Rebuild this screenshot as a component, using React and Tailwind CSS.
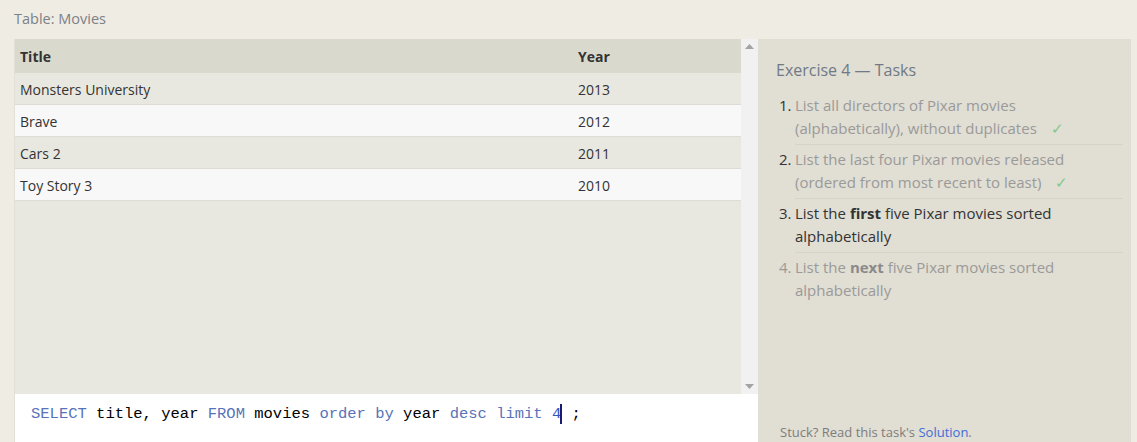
import { useState } from 'react'

const movies = [
  { title: 'Monsters University', year: 2013 },
  { title: 'Brave', year: 2012 },
  { title: 'Cars 2', year: 2011 },
  { title: 'Toy Story 3', year: 2010 },
]

function Check() {
  return <span className="ml-[10px] text-[#7fc98a]">✓</span>
}

function Task({ n, children, tone, last }) {
  return (
    <li className="flex">
      <span className={`w-[16px] shrink-0 ${n <= 2 ? 'text-[#333]' : tone}`}>{n}.</span>
      <div className={`flex-1 pb-[4px] mb-[3px] ${last ? '' : 'border-b border-[#d6d3c7]'}`}>
        <p className={`pr-[40px] ${tone}`}>{children}</p>
      </div>
    </li>
  )
}

export default function App() {
  const [query] = useState('')
  return (
    <div className="w-[1137px] h-[442px] overflow-hidden bg-[#efece4] pl-[14px] pr-[6px] font-['Open_Sans',sans-serif]">
      <div className="pt-[9px] h-[39px] text-[14.5px] leading-[20px] text-[#7c8087]">Table: Movies</div>
      <div className="flex h-[403px]">
        {/* result table + editor */}
        <div className="w-[744px] flex flex-col border-l border-[#e2e0d7]">
          <div className="flex flex-1 min-h-0">
            <div className="flex-1 bg-[#e9e8e0]">
              <div className="flex h-[34px] items-center bg-[#dad9cd] text-[14px] font-bold text-[#333]">
                <div className="w-[563px] pl-[5px]">Title</div>
                <div>Year</div>
              </div>
              {movies.map((m, i) => (
                <div
                  key={m.title}
                  className={`flex h-[32px] pt-[2px] items-center text-[14px] text-[#333] border-b border-[#dedcd5] ${i % 2 ? 'bg-[#f8f8f8]' : 'bg-[#e9e8e0]'}`}
                >
                  <div className="w-[563px] pl-[5px]">{m.title}</div>
                  <div>{m.year}</div>
                </div>
              ))}
            </div>
            <div className="w-[17px] bg-[#f1f1f1] flex flex-col items-center justify-between py-[5px]">
              <svg width="9" height="5" viewBox="0 0 9 5"><path d="M0 5 L4.5 0 L9 5 Z" fill="#a3a3a3" /></svg>
              <svg width="9" height="5" viewBox="0 0 9 5"><path d="M0 0 L9 0 L4.5 5 Z" fill="#a3a3a3" /></svg>
            </div>
          </div>
          <div className="h-[48px] bg-white pl-[16px] pt-[8px] font-['Liberation_Mono',monospace] text-[15.5px] leading-[24px] text-black">
            <span className="text-[#5773b9]">SELECT</span> title, year <span className="text-[#5773b9]">FROM</span> movies{' '}
            <span className="text-[#5773b9]">order by</span> year <span className="text-[#5773b9]">desc limit</span>{' '}
            <span className="text-[#3553c4]">4</span>
            <span className="inline-block w-[2px] h-[20px] align-middle bg-[#1a1a70] -ml-[1px]" />
            {' '};{query}
          </div>
        </div>

        {/* tasks panel */}
        <div className="flex-1 bg-[#e1ded3] flex flex-col pl-[18px] pr-[8px]">
          <div className="pt-[20px] text-[16px] leading-[22px] text-[#6f7a86]">Exercise 4 — Tasks</div>
          <ol className="mt-[13px] pl-[3px] text-[15px] leading-[23px]">
            <Task n={1} tone="text-[#9a9a9a]">
              List all directors of Pixar movies (alphabetically), without duplicates <Check />
            </Task>
            <Task n={2} tone="text-[#9a9a9a]">
              List the last four Pixar movies released (ordered from most recent to least) <Check />
            </Task>
            <Task n={3} tone="text-[#333]">
              List the <b>first</b> five Pixar movies sorted alphabetically
            </Task>
            <Task n={4} tone="text-[#9a9a9a]" last>
              List the <b className="text-[#8a8a8a]">next</b> five Pixar movies sorted alphabetically
            </Task>
          </ol>
          <div className="mt-auto pb-[1px] pl-[4px] text-[13px] leading-[18px] text-[#7d7d7d]">
            Stuck? Read this task's <span className="text-[#3d6fd6]">Solution</span>.
          </div>
        </div>
      </div>
    </div>
  )
}
